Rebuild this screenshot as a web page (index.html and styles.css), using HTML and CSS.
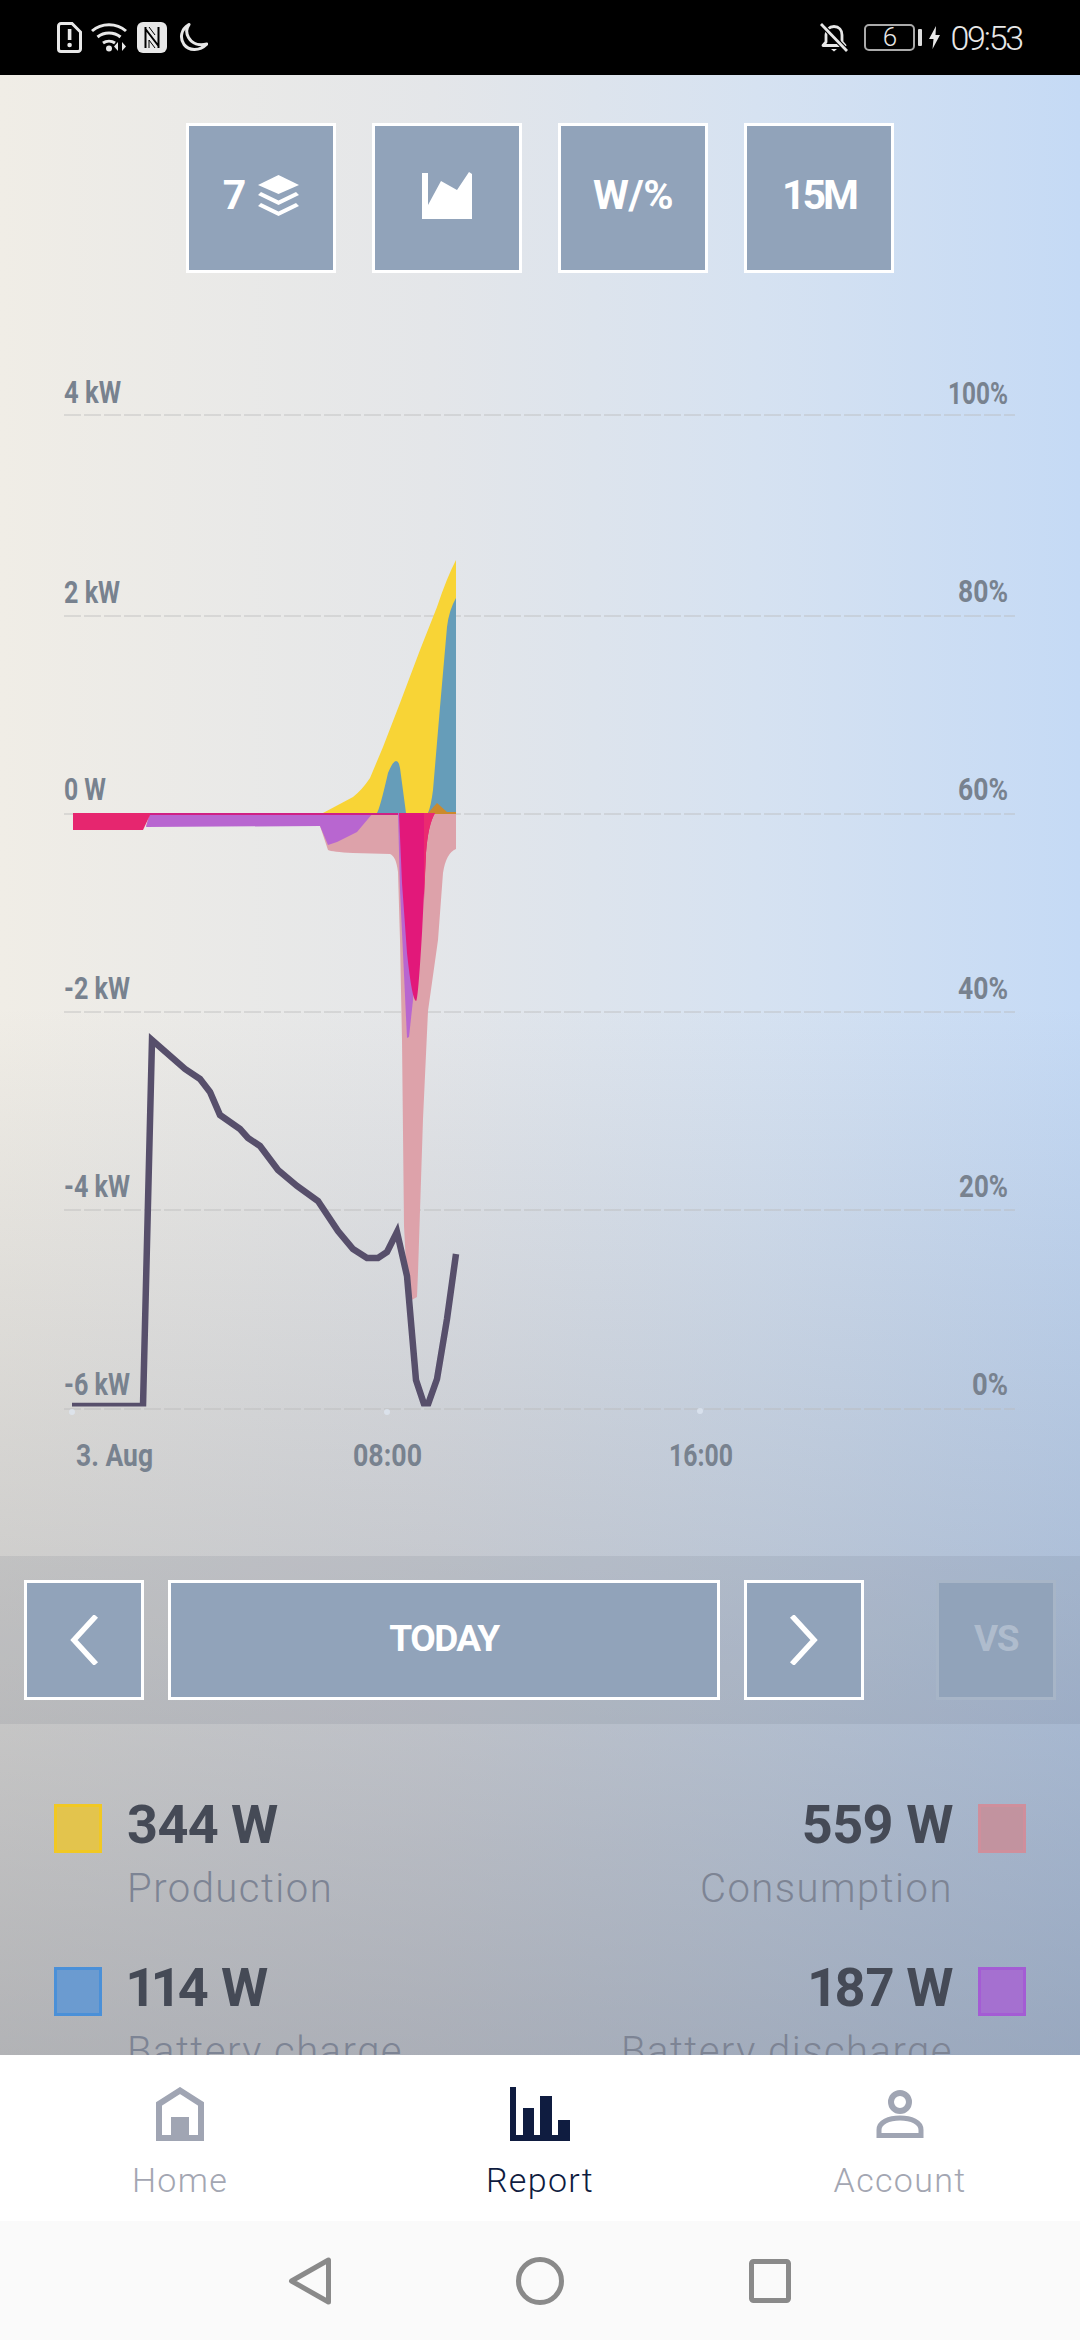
FILE: index.html
```html
<!DOCTYPE html>
<html>
  <head>
    <title>Report</title>
    <link rel="stylesheet" href="styles.css">
  </head>
  <body>
    <div class="statusbar">
      <div class="status-group">
        <svg class="ic-sim" viewBox="0 0 25 31"><path d="M4 1.500h11l8.500 8.500v17a2.500 2.500 0 0 1-2.500 2.500H4A2.500 2.500 0 0 1 1.500 27V4A2.500 2.500 0 0 1 4 1.500z" fill="none" stroke="#e8e8e8" stroke-width="3"/><rect x="10.800" y="7" width="3.600" height="11" fill="#e8e8e8"/><circle cx="12.600" cy="23" r="2.300" fill="#e8e8e8"/></svg>
        <svg class="ic-wifi" viewBox="0 0 36 29"><g fill="none" stroke="#e8e8e8" stroke-width="3"><path d="M1 8c9.500-8.500 24.500-8.500 34 0"/><path d="M6.500 14c6.500-5.500 16.500-5.500 23 0"/><path d="M12 20c3.500-2.500 8.500-2.500 12 0"/></g><circle cx="18" cy="25.500" r="3" fill="#e8e8e8"/><path d="M27 19v9l-4-4.500zM31 19v9l4-4.500z" fill="#e8e8e8"/></svg>
        <svg class="ic-nfc" viewBox="0 0 30 31"><rect width="30" height="31" rx="6" fill="#e8e8e8"/><path d="M8.500 5v21M8.500 7L21.500 24M21.500 5v21" fill="none" stroke="#000" stroke-width="2"/><path d="M12 5l6 8M12 26v-8l6 8" fill="none" stroke="#000" stroke-width="1"/></svg>
        <svg class="ic-moon" viewBox="0 0 30 29"><path d="M11 1.500C3 6 1.500 15 6 21.500c4.500 6 15 7.500 23-.5-8 2-15-.5-18.500-6.500C8 10 8 5.500 11 1.500z" fill="none" stroke="#e8e8e8" stroke-width="3" stroke-linejoin="round"/></svg>
      </div>
      <div class="status-group status-right">
        <svg class="ic-bell" viewBox="0 0 28 29"><path d="M6 19V12c0-5 3-8.500 8-8.500s8 3.500 8 8.500v7l3 3.500H3z" fill="none" stroke="#e8e8e8" stroke-width="2.800" stroke-linejoin="round"/><path d="M11 26h6l-3 2.500z" fill="#e8e8e8"/><path d="M1 1l26 27" stroke="#000" stroke-width="5"/><path d="M1 1l26 27" stroke="#e8e8e8" stroke-width="2.800"/></svg>
        <div class="battery"><span class="battery-num">6</span></div>
        <div class="battery-tip"></div>
        <svg class="ic-bolt" viewBox="0 0 11 23"><path d="M7 0L0 13h4.500L3.500 23 11 9H6.500z" fill="#e8e8e8"/></svg>
        <span class="clock">09:53</span>
      </div>
    </div>

    <div class="screen">
      <div class="toolbar">
        <div class="btn btn-square">
          <span class="btn-text">7</span>
          <svg class="ic-layers" viewBox="0 0 41 41"><path d="M20.500 0L41 10 20.500 19 0 10z" fill="#fff"/><path d="M3 17l-3 3 20.500 10L41 20l-3-3-17.500 8.500z" fill="#fff"/><path d="M3 28l-3 3 20.500 10L41 31l-3-3-17.500 8.500z" fill="#fff"/></svg>
        </div>
        <div class="btn btn-square">
          <svg class="ic-area" viewBox="0 0 50 47"><path d="M0 1h6v32L19 9l16 9L47 0l3 2v45H0z" fill="#fff"/></svg>
        </div>
        <div class="btn btn-square"><span class="btn-text btn-text-wide">W/%</span></div>
        <div class="btn btn-square"><span class="btn-text btn-text-tight">15M</span></div>
      </div>

      <svg class="chart" viewBox="0 273 1080 1283">
        <defs>
          <clipPath id="soc-clip"><rect x="0" y="273" width="1080" height="1133.500"/></clipPath>
        </defs>
        <g class="grid">
          <line x1="64" x2="1015" y1="415" y2="415"/>
          <line x1="64" x2="1015" y1="616" y2="616"/>
          <line x1="64" x2="1015" y1="814" y2="814"/>
          <line x1="64" x2="1015" y1="1012" y2="1012"/>
          <line x1="64" x2="1015" y1="1210" y2="1210"/>
          <line x1="64" x2="1015" y1="1409" y2="1409"/>
        </g>

        <path fill="#dda2aa" d="M150 813L146 826 320 826 328 850Q332 852 353 853L390 854Q396 856 398 872L400 940 402 1040 404 1226 408 1302 417 1297 418 1272 423 1119 428 1011 438 940 443 873Q446 853 456 849V813z"/>
        <path fill="#f8d436" d="M323 813L353 797Q362 790 370 778L383 747 400 703 420 650 437 607Q447 577 456 560V813z"/>
        <path fill="#669db9" d="M377 813Q380 808 388 773 393 761 396 761 399 761 400 768L406 813zM428 813Q431 806 433 790L440 707 447 627Q449 610 456 598V813z"/>
        <path fill="#cc8a2c" d="M428 813L437 803 447 812 456 812V814H428z"/>
        <path fill="#b866d0" d="M150 813L146 827 320 826 328 845 337 842 357 832 373 813z"/>
        <path fill="#b866d0" d="M398 813L400 890 407 1038 409 1037 413 1000 420 813z"/>
        <path fill="#e6266f" d="M73 813H151L143 830 73 830z"/>
        <path fill="#e2187a" d="M399 813L402 883 407 953Q412 1000 416 1001 418 1001 422 933L426 853Q428 825 435 813z"/>
        <rect x="150" y="813" width="248" height="2" fill="#cf2184"/>
        <path fill="#ea2a70" d="M424 813H435Q428 825 426 853L424 900z"/>

        <g clip-path="url(#soc-clip)">
          <polyline class="soc" points="72,1406 143,1406 152,1040 185,1069 200,1079 210,1092 220,1115 240,1129 248,1138 260,1146 278,1170 297,1186 318,1201 338,1231 353,1249 367,1258 378,1258 387,1252 397,1232 407,1276 416,1380 426,1410 437,1379 447,1319 456,1254"/>
        </g>

        <g class="dots">
          <circle cx="72" cy="1412" r="3"/>
          <circle cx="387" cy="1412" r="3"/>
          <circle cx="700" cy="1411" r="3"/>
        </g>

        <g class="axis">
          <text x="64" y="403" textLength="57" lengthAdjust="spacingAndGlyphs">4 kW</text>
          <text x="64" y="603" textLength="56" lengthAdjust="spacingAndGlyphs">2 kW</text>
          <text x="64" y="800" textLength="42" lengthAdjust="spacingAndGlyphs">0 W</text>
          <text x="64" y="999" textLength="66" lengthAdjust="spacingAndGlyphs">-2 kW</text>
          <text x="64" y="1197" textLength="66" lengthAdjust="spacingAndGlyphs">-4 kW</text>
          <text x="64" y="1395" textLength="66" lengthAdjust="spacingAndGlyphs">-6 kW</text>
          <text x="948" y="404" textLength="60" lengthAdjust="spacingAndGlyphs">100%</text>
          <text x="958" y="602" textLength="50" lengthAdjust="spacingAndGlyphs">80%</text>
          <text x="958" y="800" textLength="50" lengthAdjust="spacingAndGlyphs">60%</text>
          <text x="958" y="999" textLength="50" lengthAdjust="spacingAndGlyphs">40%</text>
          <text x="959" y="1197" textLength="49" lengthAdjust="spacingAndGlyphs">20%</text>
          <text x="972" y="1395" textLength="36" lengthAdjust="spacingAndGlyphs">0%</text>
          <text x="76" y="1466" textLength="77" lengthAdjust="spacingAndGlyphs">3. Aug</text>
          <text x="353" y="1466" textLength="69" lengthAdjust="spacingAndGlyphs">08:00</text>
          <text x="669" y="1466" textLength="64" lengthAdjust="spacingAndGlyphs">16:00</text>
        </g>
      </svg>

      <div class="datebar">
        <div class="btn btn-nav">
          <svg class="ic-chev" viewBox="0 0 30 50"><path d="M27 1L5 25l22 24" fill="none" stroke="#fff" stroke-width="5.500"/></svg>
        </div>
        <div class="btn btn-today"><span class="btn-text btn-text-sm">TODAY</span></div>
        <div class="btn btn-nav">
          <svg class="ic-chev" viewBox="0 0 30 50"><path d="M3 1l22 24L3 49" fill="none" stroke="#fff" stroke-width="5.500"/></svg>
        </div>
        <div class="btn btn-nav btn-off"><span class="btn-text btn-text-sm">VS</span></div>
      </div>

      <div class="stats">
        <div class="stat">
          <div class="swatch swatch-prod"></div>
          <div><div class="stat-value">344 W</div><div class="stat-label">Production</div></div>
        </div>
        <div class="stat stat-right">
          <div class="swatch swatch-cons"></div>
          <div><div class="stat-value">559 W</div><div class="stat-label">Consumption</div></div>
        </div>
        <div class="stat">
          <div class="swatch swatch-charge"></div>
          <div><div class="stat-value">114 W</div><div class="stat-label">Battery charge</div></div>
        </div>
        <div class="stat stat-right">
          <div class="swatch swatch-discharge"></div>
          <div><div class="stat-value">187 W</div><div class="stat-label">Battery discharge</div></div>
        </div>
      </div>
    </div>

    <div class="tabbar">
      <div class="tab">
        <svg class="tab-icon" viewBox="0 0 48 54"><path d="M3 51V17L24 3.500 45 17v34z" fill="none" stroke="#a0a5b3" stroke-width="6"/><path d="M0 54h48v-5H33V30H15v19H0z" fill="#a0a5b3"/></svg>
        <span class="tab-label">Home</span>
      </div>
      <div class="tab tab-active">
        <svg class="tab-icon tab-icon-bars" viewBox="0 0 60 54"><path d="M0 0h6v48h7V21h11v27h6V9h12v39h6V33h12v21H0z" fill="#0f1c40"/></svg>
        <span class="tab-label">Report</span>
      </div>
      <div class="tab">
        <svg class="tab-icon" viewBox="0 0 48 54"><circle cx="24" cy="15" r="9" fill="none" stroke="#a0a5b3" stroke-width="6"/><path d="M3 48.500V43c0-8 10-12 21-12s21 4 21 12v5.500z" fill="none" stroke="#a0a5b3" stroke-width="5"/></svg>
        <span class="tab-label">Account</span>
      </div>
    </div>

    <div class="sysnav">
      <svg class="sys-icon" viewBox="0 0 48 52"><path d="M42.500 5v42L5.500 26z" fill="none" stroke="#8a8a8a" stroke-width="5" stroke-linejoin="round"/></svg>
      <svg class="sys-icon" viewBox="0 0 48 52"><circle cx="24" cy="26" r="21.500" fill="none" stroke="#8a8a8a" stroke-width="5"/></svg>
      <svg class="sys-icon" viewBox="0 0 48 52"><rect x="5.500" y="6.500" width="37" height="39" rx="2" fill="none" stroke="#8a8a8a" stroke-width="5"/></svg>
    </div>
  </body>
</html>
```

FILE: styles.css
```css
html, body {
  margin: 0;
  padding: 0;
}
body {
  width: 1080px;
  height: 2340px;
  overflow: hidden;
  display: flex;
  flex-direction: column;
  font-family: "Roboto", "Liberation Sans", sans-serif;
}
svg {
  display: block;
  flex: none;
}

/* status bar */
.statusbar {
  height: 75px;
  flex: none;
  background: #000;
  display: flex;
  justify-content: space-between;
  align-items: center;
  padding: 0 58px 0 57px;
}
.status-group {
  display: flex;
  align-items: center;
}
.ic-sim { width: 25px; height: 31px; margin-right: 9px; }
.ic-wifi { width: 36px; height: 29px; margin-right: 10px; }
.ic-nfc { width: 30px; height: 31px; margin-right: 11px; }
.ic-moon { width: 30px; height: 29px; }
.ic-bell { width: 28px; height: 29px; margin-right: 16px; }
.battery {
  width: 51px;
  height: 27px;
  box-sizing: border-box;
  border: 2px solid #aaa;
  border-radius: 5px;
  display: flex;
  align-items: center;
  justify-content: center;
}
.battery-num {
  color: #e8e8e8;
  font-size: 26px;
  font-weight: 300;
  line-height: 23px;
}
.battery-tip {
  width: 4px;
  height: 17px;
  background: #ddd;
  border-radius: 1px;
  margin: 0 7px 0 3px;
}
.ic-bolt { width: 11px; height: 23px; margin-right: 10px; }
.clock {
  color: #e8e8e8;
  font-size: 34px;
  font-weight: 300;
  letter-spacing: -2.200px;
}

/* main area */
.screen {
  flex: 1;
  min-height: 0;
  overflow: hidden;
  background:
    linear-gradient(180deg, rgba(85,92,110,0) 47%, rgba(85,92,110,.4) 100%),
    linear-gradient(90deg, #f0ede6 0%, #e4e6e9 40%, #d6e2f1 70%, #c5daf5 100%);
}
.toolbar {
  display: flex;
  justify-content: center;
  gap: 36px;
  padding-top: 48px;
}
.btn {
  box-sizing: border-box;
  background: #91a3ba;
  border: 3px solid #fff;
  display: flex;
  align-items: center;
  justify-content: center;
  flex: none;
}
.btn-square {
  width: 150px;
  height: 150px;
  padding-bottom: 6px;
}
.btn-text {
  color: #fff;
  font-size: 41px;
  font-weight: 700;
  letter-spacing: -2px;
}
.btn-text-wide {
  letter-spacing: -.5px;
}
.btn-text-tight {
  letter-spacing: -3px;
}
.btn-text-sm {
  font-size: 37px;
  letter-spacing: -1.500px;
  padding-bottom: 3px;
}
.ic-layers { width: 41px; height: 41px; margin-left: 14px; }
.ic-area { width: 50px; height: 47px; }

.chart {
  width: 1080px;
  height: 1283px;
}
.grid line {
  stroke: #b9b9b9;
  stroke-opacity: .38;
  stroke-width: 2;
  stroke-dasharray: 17 3;
}
.soc {
  fill: none;
  stroke: #574f6b;
  stroke-width: 6.500;
  stroke-linejoin: miter;
  stroke-miterlimit: 3;
}
.dots circle {
  fill: #dfe8f4;
  opacity: .7;
}
.axis text {
  font-family: "Roboto", "Liberation Sans", sans-serif;
  font-size: 31px;
  font-weight: 700;
  fill: #78828f;
}

/* date row */
.datebar {
  height: 168px;
  box-sizing: border-box;
  display: flex;
  align-items: center;
  gap: 24px;
  padding: 0 24px;
  background: rgba(80,88,105,.11);
}
.btn-nav {
  width: 120px;
  height: 120px;
}
.btn-today {
  width: 552px;
  height: 120px;
}
.btn-off {
  margin-left: auto;
  border-color: rgba(255,255,255,.2);
}
.btn-off .btn-text {
  color: rgba(255,255,255,.28);
}
.ic-chev { width: 30px; height: 50px; }

/* legend */
.stats {
  display: grid;
  grid-template-columns: 1fr 1fr;
  row-gap: 48px;
  padding: 74px 54px 0;
}
.stat {
  display: flex;
  gap: 25px;
}
.stat-right {
  flex-direction: row-reverse;
  text-align: right;
}
.swatch {
  width: 48px;
  height: 49px;
  box-sizing: border-box;
  border: 3px solid;
  margin-top: 6px;
}
.swatch-prod { background: #e3c44d; border-color: #f1c823; }
.swatch-cons { background: #c2939f; border-color: #cf8f9c; }
.swatch-charge { background: #6b9bd0; border-color: #4a90d8; }
.swatch-discharge { background: #a570d0; border-color: #a45cd4; }
.stat-value {
  color: #454a56;
  font-size: 54px;
  font-weight: 700;
  line-height: 54px;
  letter-spacing: -.6px;
  font-variant-numeric: proportional-nums;
}
.stat-label {
  color: #7d8494;
  font-size: 40px;
  font-weight: 300;
  line-height: 48px;
  margin-top: 13px;
  letter-spacing: 1.500px;
}

/* tabs */
.tabbar {
  height: 166px;
  flex: none;
  background: #fff;
  display: flex;
}
.tab {
  flex: 1;
  display: flex;
  flex-direction: column;
  align-items: center;
  padding-top: 32px;
  color: #a3a6b2;
}
.tab-active {
  color: #0f1c40;
}
.tab-icon {
  width: 48px;
  height: 54px;
}
.tab-icon-bars {
  width: 60px;
}
.tab-label {
  font-size: 34px;
  font-weight: 300;
  line-height: 40px;
  margin-top: 19px;
  letter-spacing: 1.300px;
}

.sysnav {
  height: 119px;
  flex: none;
  background: #fafafa;
  display: flex;
  justify-content: center;
  align-items: center;
  gap: 182px;
}
.sys-icon {
  width: 48px;
  height: 52px;
}
```
